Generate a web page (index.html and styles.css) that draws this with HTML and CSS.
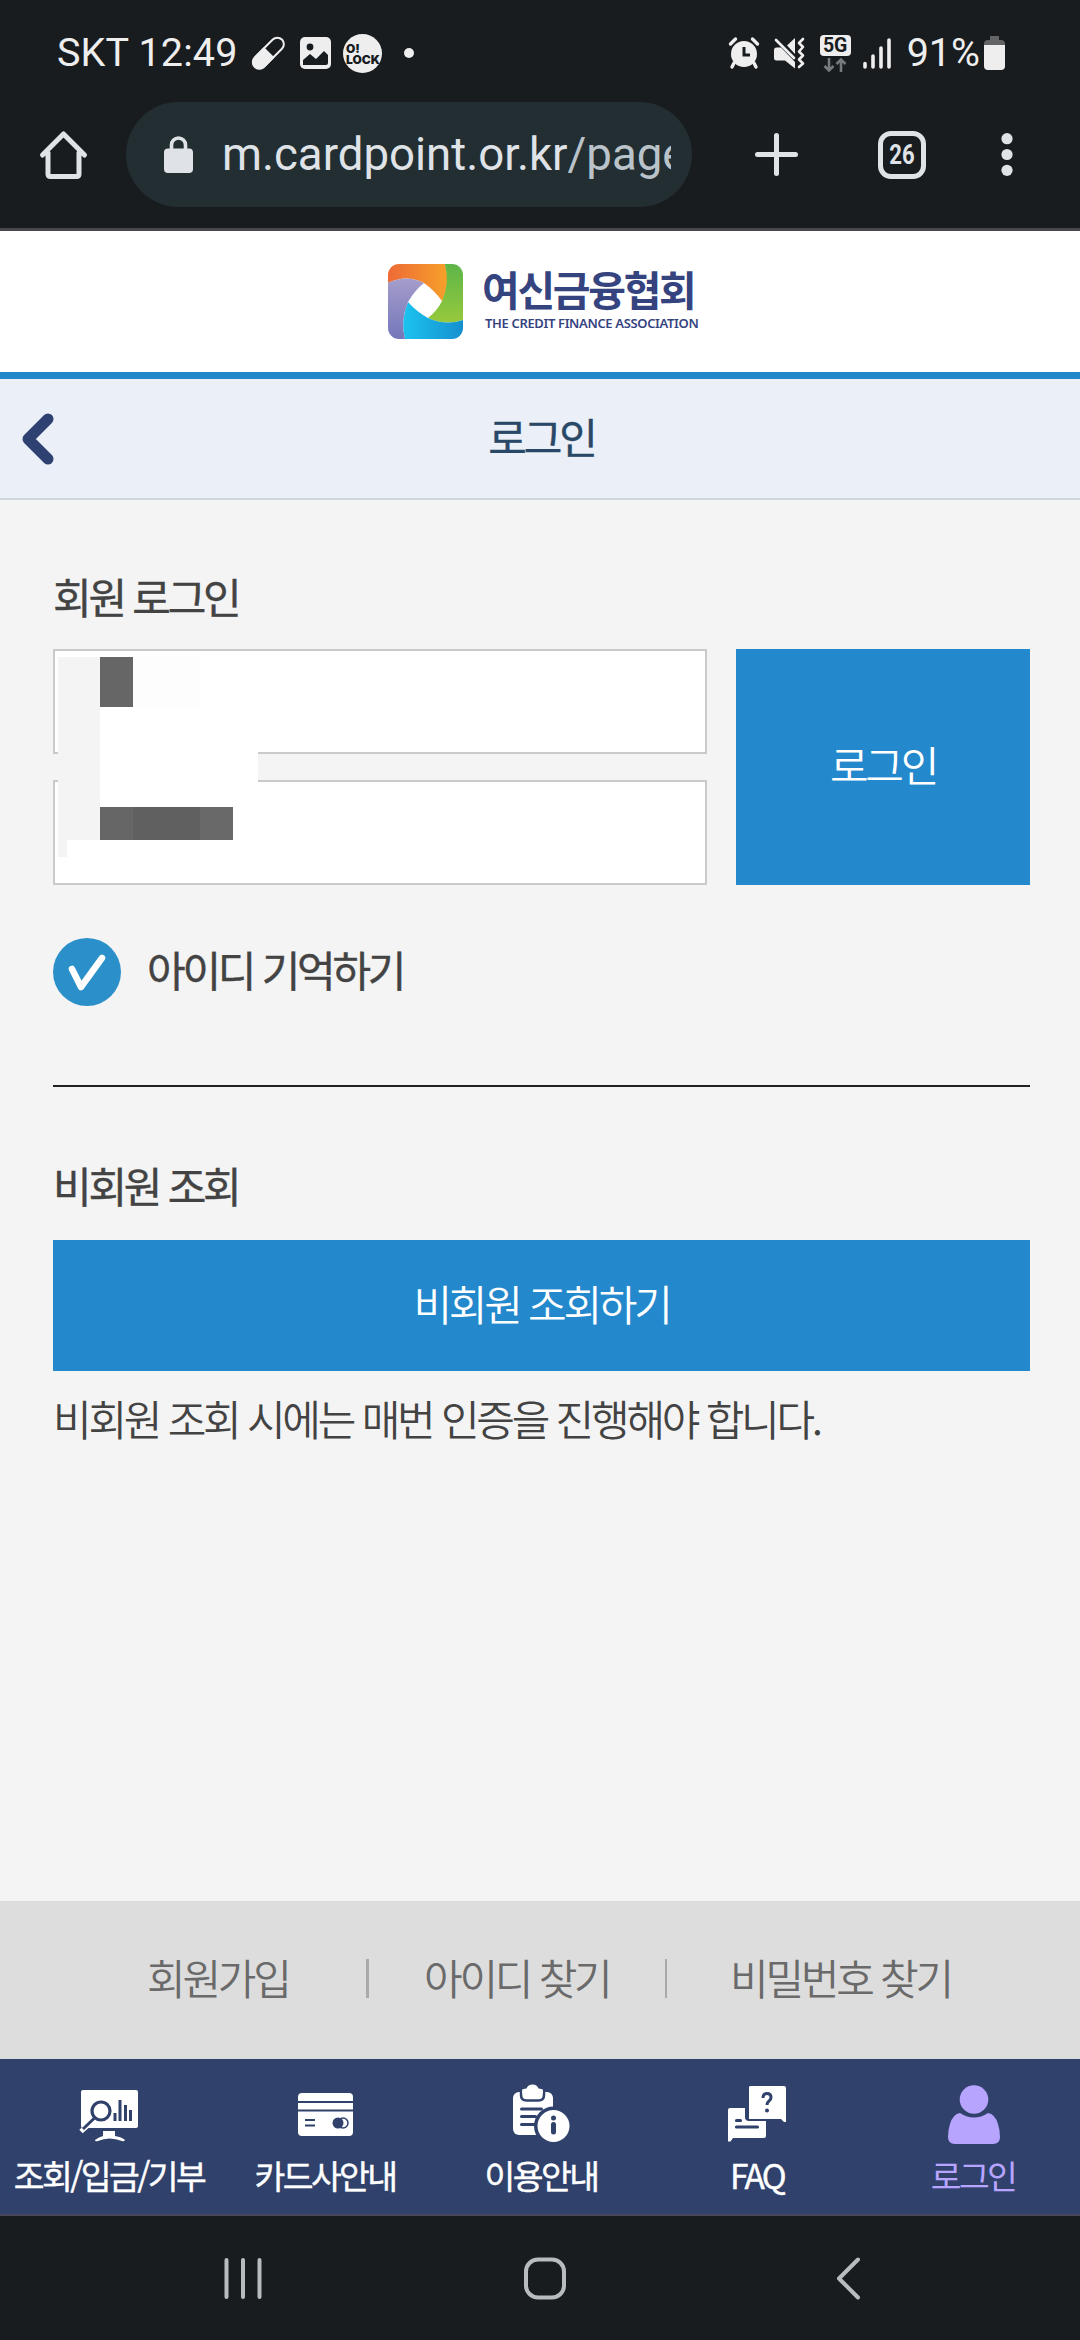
FILE: index.html
```html
<!DOCTYPE html>
<html lang="ko">
<head>
<meta charset="utf-8">
<title>로그인</title>
<link rel="stylesheet" href="styles.css">
</head>
<body>
<header class="chrome">
  <div class="status">
    <span class="status-text carrier">SKT 12:49</span>
    <svg class="ic-pill" width="33" height="34" viewBox="0 0 33 34"><g transform="rotate(45 16.5 17)"><rect x="10" y="-2" width="13" height="38" rx="6.5" fill="none" stroke="#eee" stroke-width="2"/><path d="M9 16h15v14a7.5 7.5 0 0 1-15 0z" fill="#eee"/></g></svg>
    <svg class="ic-img" width="31" height="32" viewBox="0 0 31 32"><rect width="31" height="32" rx="5" fill="#eee"/><circle cx="10" cy="10" r="3.4" fill="#191c1f"/><path d="M3 28v-5l7-6 6 5 8-8 4 4v8q0 2-2 2z" fill="#191c1f"/></svg>
    <span class="lock-badge"><b>O!</b><b>LOCK</b></span>
    <i class="dot"></i>
    <span class="grow"></span>
    <svg class="ic-alarm" width="30" height="32" viewBox="0 0 30 32"><circle cx="15" cy="17" r="13" fill="#eee"/><path d="M1.5 7l5-5M28.5 7l-5-5M5 26l-2 4M25 26l2 4" stroke="#eee" stroke-width="3.4" stroke-linecap="round"/><path d="M15 10v8h6" fill="none" stroke="#191c1f" stroke-width="3"/></svg>
    <svg class="ic-mute" width="31" height="32" viewBox="0 0 31 32"><path d="M0 13q0-2.500 2.500-2.500H7L21 25v6.500L11 23.500H2.500Q0 23.500 0 21zM13 8.500L21 1v16z" fill="#eee"/><path d="M2 3l18 18" stroke="#eee" stroke-width="2.600" stroke-linecap="round"/><path d="M29 2l-4 4 4 4-4 4.500 4 4-4 4 4 4-4 3.500" fill="none" stroke="#eee" stroke-width="2.600" stroke-linejoin="round" stroke-linecap="round"/></svg>
    <span class="net"><b>5G</b><svg width="24" height="14" viewBox="0 0 24 14"><path d="M6 0v12M1.500 8L6 12.500 10.500 8M18 14V2M13.500 6L18 1.500 22.500 6" fill="none" stroke="#777a7c" stroke-width="2.600"/></svg></span>
    <svg class="ic-signal" width="29" height="31" viewBox="0 0 29 31"><path d="M2 25.500V29M10 18v11M18 10v19M26 2v27" stroke="#eee" stroke-width="3.600" stroke-linecap="round"/></svg>
    <span class="status-text">91%</span>
    <svg class="ic-batt" width="21" height="34" viewBox="0 0 21 34"><path d="M6 0h9v4h2q4 0 4 4v2H0V8q0-4 4-4h2z" fill="#626466"/><path d="M0 9h21v21q0 4-4 4H4q-4 0-4-4z" fill="#eee"/></svg>
  </div>
  <div class="toolbar">
    <svg class="ic-home" width="48" height="50" viewBox="0 0 48 50"><path d="M2.500 25L23.500 4l21 21M8 23v21q0 2.500 2.500 2.500h26q2.500 0 2.500-2.500V23" fill="none" stroke="#dfe3e7" stroke-width="5" stroke-linecap="round" stroke-linejoin="round"/></svg>
    <div class="omnibox">
      <svg width="29" height="37" viewBox="0 0 29 37"><rect y="12.500" width="29" height="24.500" rx="4" fill="#dfe3e7"/><path d="M7.500 14V9a7 7 0 0 1 14 0v5" fill="none" stroke="#dfe3e7" stroke-width="3.600"/></svg>
      <div class="url">m.cardpoint.or.kr<span>/page</span></div>
    </div>
    <svg class="ic-plus" width="43" height="43" viewBox="0 0 43 43"><path d="M21.500 2.500v38M2.500 21.500h38" stroke="#dfe3e7" stroke-width="5" stroke-linecap="round"/></svg>
    <span class="tabs"><b>26</b></span>
    <svg class="ic-more" width="12" height="43" viewBox="0 0 12 43"><g fill="#dfe3e7"><circle cx="6" cy="5.700" r="5.600"/><circle cx="6" cy="21.500" r="5.600"/><circle cx="6" cy="37.300" r="5.600"/></g></svg>
  </div>
</header>

<div class="brand">
  <svg width="75" height="75" viewBox="0 0 75 75">
    <defs>
      <clipPath id="tile"><rect width="75" height="75" rx="11"/></clipPath>
      <linearGradient id="or"><stop stop-color="#ee6a36"/><stop offset="1" stop-color="#f6a02a"/></linearGradient>
      <linearGradient id="gr" x1="0" y1="0" x2="0" y2="1"><stop stop-color="#5db548"/><stop offset="1" stop-color="#97c93d"/></linearGradient>
      <linearGradient id="bl"><stop stop-color="#1cc3ef"/><stop offset="1" stop-color="#1590cf"/></linearGradient>
      <linearGradient id="pu" x1="0" y1="0" x2="0" y2="1"><stop stop-color="#a59dcb"/><stop offset="1" stop-color="#7477bb"/></linearGradient>
    </defs>
    <g clip-path="url(#tile)">
      <path d="M0 0h75v75H0z" fill="#fff"/>
      <path d="M0 19V0h57q6 20-3 37Q46 26 36 19 18 10 0 19z" fill="url(#or)"/>
      <path d="M57 0h18v56q-18 6-35-2 9-7 14-17 8-18 3-37z" fill="url(#gr)"/>
      <path d="M75 56v19H17q-5-18 3-37 9 10 20 16 18 8 35 2z" fill="url(#bl)"/>
      <path d="M0 19q18-9 36 0-9 7-16 19-8 19-3 37H0z" fill="url(#pu)"/>
    </g>
  </svg>
  <div class="brand-text"><strong>여신금융협회</strong><small>THE CREDIT FINANCE ASSOCIATION</small></div>
</div>

<div class="titlebar">
  <svg class="back" width="34" height="54" viewBox="0 0 34 54"><path d="M27 7L7 27l20 20" fill="none" stroke="#2f4170" stroke-width="11" stroke-linecap="round" stroke-linejoin="round"/></svg>
  <h1>로그인</h1>
</div>

<main>
  <h2>회원 로그인</h2>
  <form class="login">
    <div class="fields">
      <div class="field"></div>
      <div class="field"></div>
      <div class="mask">
        <i class="m-side"></i><i class="m-tail"></i><i class="m-gap"></i><i class="m-id"></i><i class="m-pw"></i>
      </div>
    </div>
    <div class="submit">로그인</div>
  </form>
  <div class="remember">
    <svg width="68" height="68" viewBox="0 0 68 68"><circle cx="34" cy="34" r="34" fill="#2b8fc9"/><path d="M19 31l9 18 21-29" fill="none" stroke="#fff" stroke-width="6.500" stroke-linecap="round" stroke-linejoin="round"/></svg>
    <span>아이디 기억하기</span>
  </div>
  <h2 class="guest">비회원 조회</h2>
  <div class="guest-btn">비회원 조회하기</div>
  <p>비회원 조회 시에는 매번 인증을 진행해야 합니다.</p>
</main>

<div class="links">
  <span class="l1">회원가입</span><i></i><span class="l2">아이디 찾기</span><i class="thin"></i><span class="l3">비밀번호 찾기</span>
</div>

<nav class="menu">
  <a><svg width="60" height="60" viewBox="0 0 60 60"><rect x="2" y="5" width="57" height="38" rx="2" fill="#fff"/><path d="M24 46h12v5q7 1 10 4-1 2-3 1-13-5-24 0-3 1-3-1 4-3 8-4z" fill="#fff"/><path d="M16 34L2 46.500" stroke="#fff" stroke-width="5"/><circle cx="22" cy="26" r="9" fill="none" stroke="#30416b" stroke-width="3.200"/><path d="M15.500 33L4 44M36 36V28M41 36V15M46.500 36V20M51.500 36V25" fill="none" stroke="#30416b" stroke-width="3"/></svg><span>조회/입금/기부</span></a>
  <a><svg width="60" height="60" viewBox="0 0 60 60"><rect x="3" y="8" width="55" height="43" rx="4" fill="#fff"/><path d="M3 17h55M3 25.500h55M10 35h10M10 40.500h10" stroke="#30416b" stroke-width="2.200"/><circle cx="43" cy="38" r="5.500" fill="#30416b"/><circle cx="48" cy="38" r="5" fill="none" stroke="#30416b" stroke-width="1.500"/></svg><span>카드사안내</span></a>
  <a><svg width="60" height="60" viewBox="0 0 60 60"><rect x="2" y="7" width="40" height="43" rx="6" fill="#fff"/><path d="M10 3v7q0 5.500 5.500 5.500h12q5.500 0 5.500-5.500V3z" fill="#fff" stroke="#30416b" stroke-width="2.500"/><path d="M8.500 0h26v3.500h-26z" fill="#30416b"/><path d="M11 8q0-4.500 4.500-4.500Q17-.5 21.500-.5T27.500 3.500Q32 3.500 32 8z" fill="#fff"/><path d="M10.500 24h20M10.500 31.500h14M10.500 39.500h14" stroke="#30416b" stroke-width="3" stroke-linecap="round"/><circle cx="42.500" cy="41" r="19.500" fill="#30416b"/><circle cx="42.500" cy="41" r="16" fill="#fff"/><circle cx="42.500" cy="33" r="2.500" fill="#30416b"/><path d="M42.500 39.500v7.500" stroke="#30416b" stroke-width="5" stroke-linecap="round"/></svg><span>이용안내</span></a>
  <a><svg width="60" height="60" viewBox="0 0 60 60"><path d="M1 25q0-2 2-2h15v9q0 4 4 4h17v15q0 2-2 2H6l-2.500 3.500H1z" fill="#fff"/><path d="M22 2q0-1 2-1h33q2 0 2 2v34h-2l-3-3H22z" fill="#fff"/><path d="M9.500 35.500h4M9.500 42h21" stroke="#30416b" stroke-width="3.200" stroke-linecap="round"/><path d="M36 13q0-4.500 4-4.500t4 4q0 2-2 3.500-2 1.500-2 4" fill="none" stroke="#30416b" stroke-width="3"/><circle cx="40" cy="25.500" r="2" fill="#30416b"/></svg><span>FAQ</span></a>
  <a class="on"><svg width="60" height="60" viewBox="0 0 60 60"><circle cx="31" cy="14.500" r="14.300" fill="#b7a4ff"/><path d="M17 28q14 9 28 0 7 1 10 11 2 6 2 13 0 7-7 7H12q-7 0-7-7 0-7 2-13 3-10 10-11z" fill="#b7a4ff"/></svg><span>로그인</span></a>
</nav>

<footer class="sysnav">
  <svg width="38" height="44" viewBox="0 0 38 44"><path d="M2.500 3v37M19 3v37M35.500 3v37" stroke="#b9bcbe" stroke-width="4" stroke-linecap="round"/></svg>
  <svg class="home" width="42" height="44" viewBox="0 0 42 44"><rect x="2" y="2.500" width="38" height="38" rx="12" fill="none" stroke="#b9bcbe" stroke-width="4"/></svg>
  <svg class="prev" width="26" height="44" viewBox="0 0 26 44"><path d="M22 2.500L3 21.500l19 19" fill="none" stroke="#b9bcbe" stroke-width="4" stroke-linecap="round" stroke-linejoin="round"/></svg>
</footer>
</body>
</html>
```
FILE: styles.css
```css
* { box-sizing: border-box; }
body {
  margin: 0;
  width: 1080px;
  height: 2340px;
  display: flex;
  flex-direction: column;
  background: #f4f4f4;
  color: #434343;
  font-family: "Noto Sans CJK KR", sans-serif;
  overflow: hidden;
}
svg { display: block; flex: none; overflow: visible; }
h1, h2, p { margin: 0; font-weight: 400; }

/* browser chrome */
.chrome {
  height: 231px;
  background: #191c1f;
  border-bottom: 3px solid #48484c;
  font-family: Roboto, sans-serif;
}
.status { display: flex; align-items: center; height: 102px; padding: 4px 75px 0 57px; }
.status-text { color: #eee; font-size: 39.5px; line-height: 46px; white-space: nowrap; }
.carrier { width: 195px; letter-spacing: .15px; }
.ic-img { margin-left: 15px; }
.lock-badge {
  width: 39px; height: 39px; margin-left: 12px; padding: 9px 0 0 3px;
  border-radius: 50%; background: #eee; color: #191c1f;
  font: 700 12px/11px Inter, sans-serif;
}
.lock-badge b { display: block; }
.dot { width: 10px; height: 10px; margin-left: 22px; border-radius: 50%; background: #eee; }
.grow { flex: 1; }
.ic-mute { margin-left: 15px; }
.net { display: flex; flex-direction: column; align-items: center; gap: 2px; margin-left: 15px; }
.net b {
  width: 31px; height: 21px; border-radius: 4px; background: #eee; color: #191c1f;
  font-size: 19.5px; line-height: 22px; text-align: center;
}
.ic-signal { margin: 0 15px 0 12px; }
.ic-batt { margin-left: 4px; }
.toolbar { display: flex; align-items: center; height: 105px; padding: 0 67px 0 40px; }
.omnibox {
  display: flex; align-items: center; width: 566px; height: 105px;
  margin-left: 38px; padding-left: 38px; border-radius: 53px; background: #232e33;
}
.url {
  width: 449px; margin-left: 29px; overflow: hidden; white-space: nowrap;
  color: #dfe3e7; font-size: 45.6px; line-height: 60px; padding-top: 1px;
}
.url span { color: #bac3c9; }
.ic-plus { margin-left: 63px; }
.tabs {
  width: 48px; height: 48px; margin-left: 80px; border: 5px solid #dfe3e7; border-radius: 13px;
  color: #dfe3e7; text-align: center;
}
.tabs b { display: block; font-size: 27px; line-height: 38px; transform: scaleX(.82); }
.ic-more { margin-left: auto; }

/* brand */
.brand {
  display: flex; height: 148px; padding: 33px 0 0 388px;
  background: #fff; border-bottom: 7px solid #2388c9;
}
.brand-text { display: flex; flex-direction: column; margin-left: 19px; color: #35437f; white-space: nowrap; }
.brand-text strong { font-weight: 700; font-size: 41px; line-height: 48px; letter-spacing: -2.3px; }
.brand-text small { font: 600 13px/15px "Noto Sans", sans-serif; margin: 4px 0 0 3px; letter-spacing: -.35px; }

.titlebar {
  position: relative; height: 121px; background: #ebeff8;
  border-bottom: 2px solid #cdd5dd; text-align: center;
}
.titlebar h1 { font-size: 42px; line-height: 114px; letter-spacing: -3.2px; color: #294766; padding-left: 3px; }
.back { position: absolute; left: 21px; top: 33px; }

/* content */
main {
  height: 1401px; padding: 65px 50px 0 53px;
  font-size: 42px; letter-spacing: -3.25px; white-space: nowrap;
}
h2 { font-size: 42px; line-height: 62px; }
.titlebar h1, h2, .remember { -webkit-text-stroke: .4px currentColor; }
.login { display: flex; gap: 29px; margin-top: 22px; }
.fields { position: relative; width: 654px; display: flex; flex-direction: column; gap: 26px; }
.field { height: 105px; border: 2px solid #cacaca; background: #fff; }
.submit { width: 294px; height: 236px; background: #2388cc; color: #fff; text-align: center; line-height: 230px; font-weight: 350; }
.mask { position: absolute; left: 5px; top: 8px; width: 201px; height: 200px; }
.mask i { position: absolute; }
.m-side { left: 0; top: 0; width: 42px; height: 183px; background: #f4f4f4; }
.m-tail { left: 0; top: 183px; width: 9px; height: 17px; background: #f4f4f4; }
.m-gap { left: 42px; top: 0; width: 158px; height: 183px; background: #fff; }
.m-id { left: 42px; top: 0; width: 33px; height: 50px; background: #666; box-shadow: 33px 0 0 #fdfdfd, 67px 0 0 #fdfdfd; }
.m-pw { left: 42px; top: 150px; width: 133px; height: 33px; background: linear-gradient(90deg, #666 33px, #606060 33px, #606060 100px, #696969 100px); }
.remember { display: flex; align-items: center; gap: 26px; height: 68px; margin-top: 53px; }
.remember span { line-height: 62px; padding-bottom: 6px; }
.guest { margin-top: 79px; padding-top: 67px; border-top: 2px solid #222; }
.guest-btn { height: 131px; margin-top: 24px; background: #2388cc; color: #fff; text-align: center; line-height: 125px; font-weight: 350; }
main p { font-weight: 350; line-height: 62px; margin-top: 16px; }

.links {
  display: flex; height: 158px; padding: 58px 0 0 147px; background: #ddd; color: #6a6a6a;
  font-weight: 350; font-size: 42px; line-height: 36px; letter-spacing: -3.25px; white-space: nowrap;
}
.links i { width: 3px; height: 39px; background: #aaa; }
.links .thin { width: 2px; }
.l1 { width: 219px; }
.l2 { width: 241px; margin-left: 55px; }
.l3 { margin-left: 63px; }

.menu {
  display: grid; grid-template-columns: repeat(5, 216px); height: 157px;
  background: #30416b; border-bottom: 2px solid #48485a; color: #fff;
}
.menu a { display: flex; flex-direction: column; align-items: center; padding: 26px 0 0 2px; white-space: nowrap; }
.menu span { font-size: 33.5px; line-height: 48px; font-weight: 400; letter-spacing: -2.6px; margin-top: 6px; -webkit-text-stroke: .4px currentColor; }
.menu .on { color: #b7a4ff; }
.menu .on span { -webkit-text-stroke: 0; }

.sysnav { flex: 1; background: #191c1f; display: flex; padding: 41px 0 0 224px; }
.sysnav .home { margin-left: 262px; }
.sysnav .prev { margin-left: 270px; }
```
